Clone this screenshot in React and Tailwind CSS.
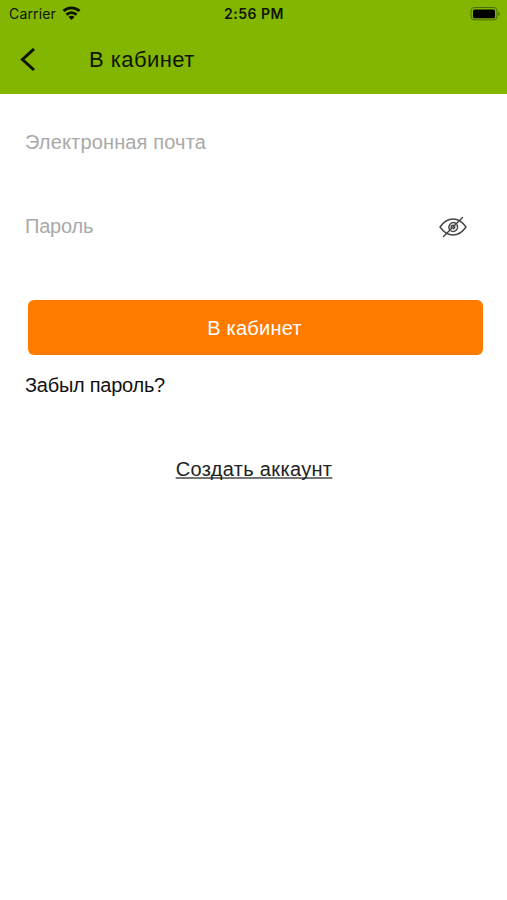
import { useState } from 'react';

function StatusBar() {
  return (
    <div className="relative flex h-7 items-center justify-between pl-[9px] pr-[7px]">
      <div className="flex items-center gap-1.5">
        <span className="font-[Inter,sans-serif] text-[14px] leading-7 tracking-[0.15px]">Carrier</span>
        <svg className="-mt-0.5" width="19" height="14" viewBox="0 0 18 14" fill="none" stroke="currentColor" strokeWidth="2.8">
          <path d="M1 5.1a11.300 11.300 0 0 1 16 0" />
          <path d="M4 8.700a7 7 0 0 1 10 0" />
          <path d="M9 14 6 11a4.200 4.200 0 0 1 6 0z" fill="currentColor" stroke="none" />
        </svg>
      </div>
      <span className="absolute left-[224px] top-0 whitespace-nowrap font-[Inter,sans-serif] text-[14px] font-semibold leading-7 tracking-[0.5px]">
        2:56 PM
      </span>
      <svg className="-mt-px" width="30" height="14" viewBox="0 0 30 14">
        <rect x="1" y="0.5" width="26" height="12.4" rx="3.5" fill="none" stroke="#000" strokeOpacity="0.4" />
        <rect x="3" y="2.4" width="22" height="8.8" rx="1.5" fill="#000" />
        <path d="M28.3 4.8v4q1.4-.6 1.4-2t-1.4-2z" fill="#000" fillOpacity="0.45" />
      </svg>
    </div>
  );
}

function EyeOffIcon() {
  return (
    <svg width="28" height="22" viewBox="0 0 28 22" fill="none" stroke="currentColor" strokeWidth="1.4" strokeLinecap="round">
      <path d="M1 11C4.5 6 9 3 14 3S23.500 6 27 11c-3.500 5-8 8-13 8S4.500 16 1 11z" strokeLinejoin="round" />
      <path d="M11 14.200a4.600 4.600 0 0 1 6-6.800M18 8.800a4.600 4.600 0 0 1-5.800 6.400" />
      <path d="M12.200 11.500a1.900 1.900 0 0 1 2.200-2.300M15.800 10.800a1.900 1.900 0 0 1-1.500 2" />
      <path d="M4.500 20.500 23.500 1.500" />
    </svg>
  );
}

export default function App() {
  const [showPassword, setShowPassword] = useState(false);

  return (
    <div className="h-[900px] w-full overflow-hidden bg-white font-['Liberation_Sans',Arial,sans-serif] text-black">
      <header className="h-[94px] bg-[#82b600] text-[#0d1500]">
        <StatusBar />
        <div className="flex h-[64px] items-center pl-5">
          <button type="button" aria-label="Назад" className="w-[69px]">
            <svg width="16" height="24" viewBox="0 0 16 24" fill="none" stroke="currentColor" strokeWidth="3">
              <path d="M14 1 2.500 11.500 14 22" />
            </svg>
          </button>
          <h1 className="text-[22px] leading-none tracking-[0.45px]">В кабинет</h1>
        </div>
      </header>

      <form className="pl-[25px] pr-[24px]" onSubmit={(e) => e.preventDefault()}>
        <input
          type="text"
          name="email"
          placeholder="Электронная почта"
          className="mt-[34px] block h-[28px] w-full text-[20px] tracking-[0.15px] outline-none placeholder:text-[#a9a9a9]"
        />
        <div className="mt-14 flex h-[28px] items-center pr-4">
          <input
            type={showPassword ? 'text' : 'password'}
            name="password"
            placeholder="Пароль"
            className="h-[28px] min-w-0 flex-1 text-[20px] tracking-[-0.2px] outline-none placeholder:text-[#a9a9a9]"
          />
          <button type="button" aria-label="Пароль" className="mt-px text-[#444]" onClick={() => setShowPassword(!showPassword)}>
            <EyeOffIcon />
          </button>
        </div>
        <button
          type="submit"
          className="ml-[3px] mt-[60px] flex h-[55px] w-[455px] items-center justify-center rounded-[6px] bg-[#ff7b00] pr-[2px] text-[20px] tracking-[0.25px] text-white"
        >
          В кабинет
        </button>
        <a href="#" className="mt-[16px] block w-fit text-[20px] leading-[28px] tracking-[-0.25px] text-[#111]">Забыл пароль?</a>
        <div className="mt-[56px] flex justify-center">
          <a href="#" className="text-[20px] leading-[28px] tracking-[0.33px] text-[#222] underline decoration-[#777] decoration-[1.5px] underline-offset-1 [text-decoration-skip-ink:none]">
            Создать аккаунт
          </a>
        </div>
      </form>
    </div>
  );
}
